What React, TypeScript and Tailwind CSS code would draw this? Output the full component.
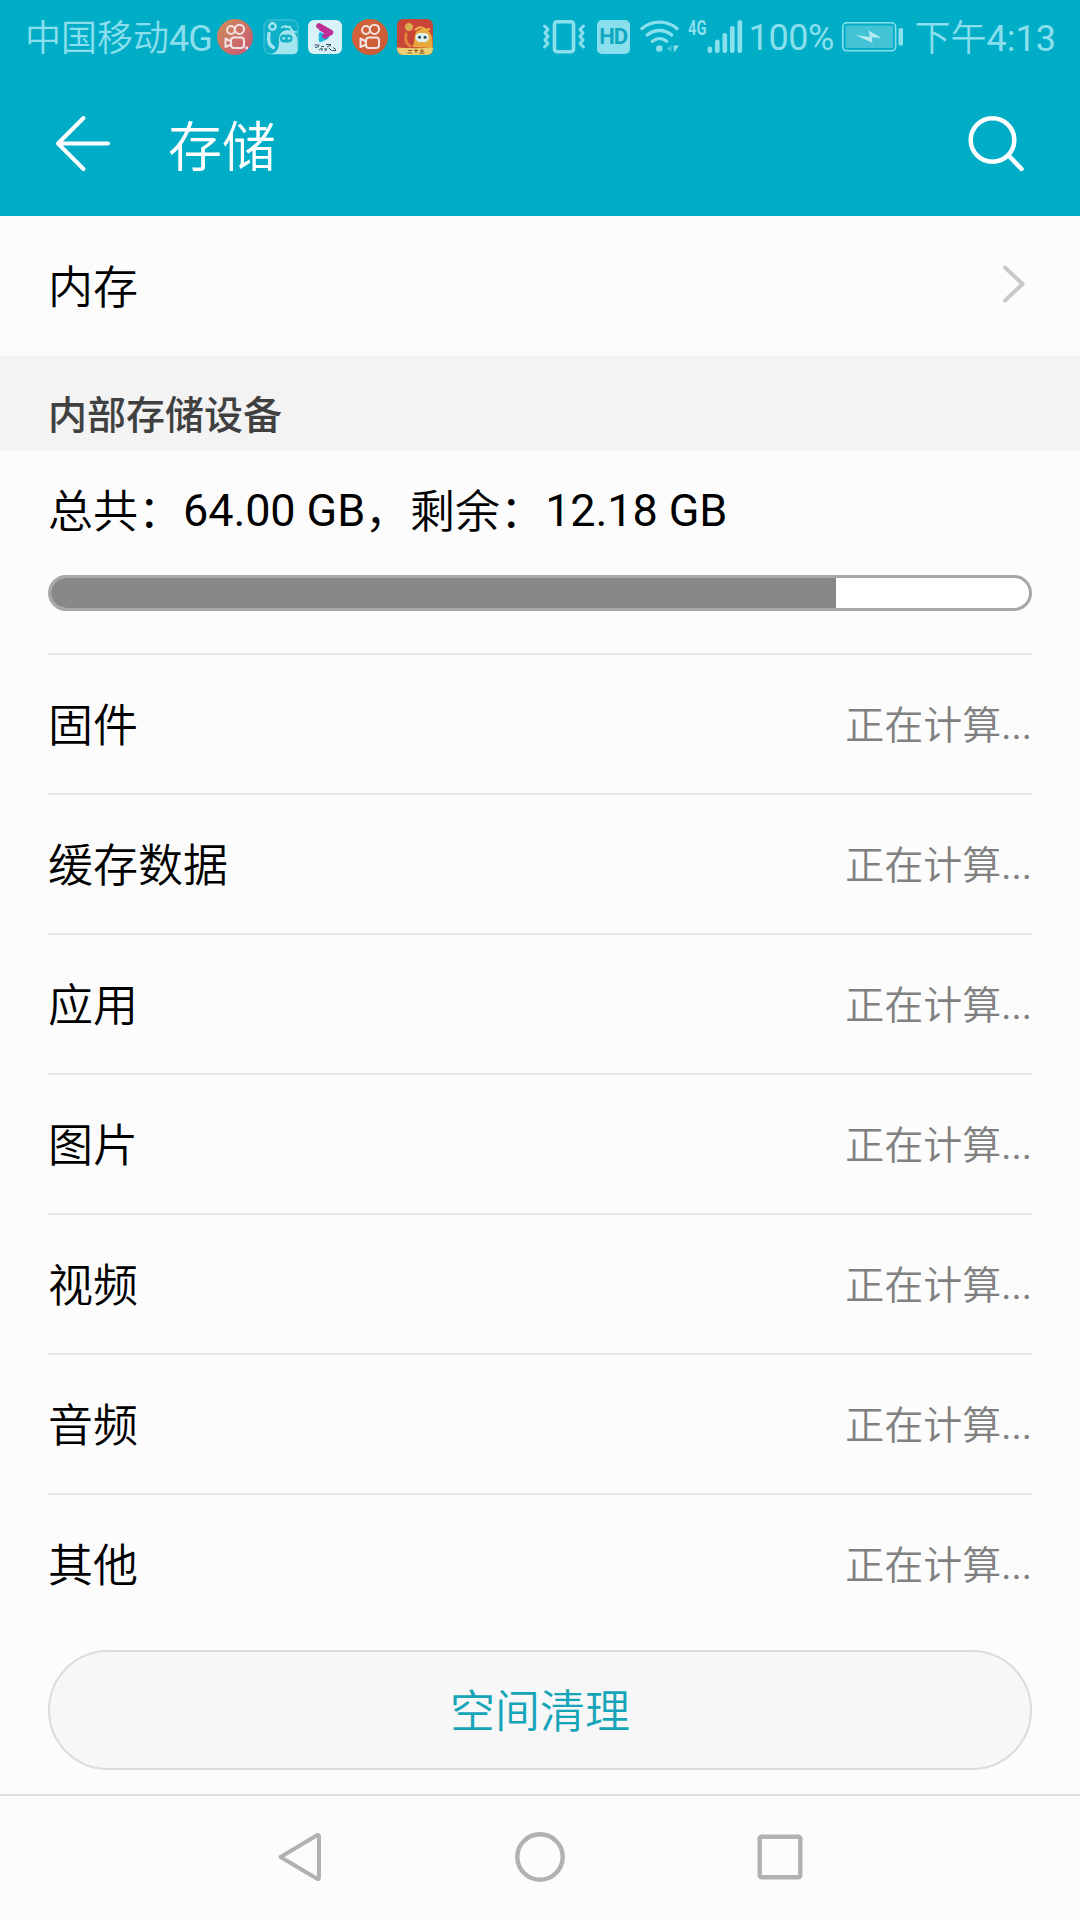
const categories = ['固件', '缓存数据', '应用', '图片', '视频', '音频', '其他']

const storage = { total: 64, free: 12.18 }

function KwaiIcon({ id, from, to, dot = false }: { id: string; from: string; to: string; dot?: boolean }) {
  return (
    <svg width="36" height="36" viewBox="0 0 36 36" fill="none">
      <defs>
        <linearGradient id={id} x1="0" y1="0" x2="1" y2="1">
          <stop offset="0" stopColor={from} />
          <stop offset="1" stopColor={to} />
        </linearGradient>
      </defs>
      <circle cx="18" cy="18" r="18" fill={`url(#${id})`} />
      <g stroke="#f3e3e4" strokeWidth="2">
        <circle cx="14" cy="11" r="3.9" />
        <circle cx="22.5" cy="10.3" r="4.6" />
        <rect x="14" y="18.5" width="13" height="10.5" rx="3" />
        <path d="M14 22.5 8.5 19.5v8.5l5.5-2.5" strokeLinejoin="round" />
      </g>
      {dot && <rect x="28.5" y="27.5" width="2.6" height="2.8" fill="#f3e3e4" />}
    </svg>
  )
}

function GhostIcon() {
  return (
    <svg width="36" height="36" viewBox="0 0 36 36" fill="none">
      <rect x="1" y="1" width="34" height="34" rx="6" fill="#0fafc8" stroke="#4cc8db" strokeWidth="1" />
      <circle cx="9.5" cy="7.5" r="3.2" stroke="#a4e5ee" strokeWidth="2.4" />
      <path d="M6 14.5c-1 6-.5 12 4.5 14" stroke="#a4e5ee" strokeWidth="3.4" strokeLinecap="round" />
      <path d="M9 35c7-3 7-8 7-14 0-7 4-10 9-10 6 0 9.500 5 9.500 12v8c0 2.500-1.500 4-4 4z" fill="#a4e5ee" />
      <path d="M18 9c3-3 8-2.500 12 3M22 8.500l6-1M34 13l-6-.5" stroke="#a4e5ee" strokeWidth="1.6" />
      <rect x="17" y="15.5" width="12.500" height="8" rx="4" fill="#14b0c8" />
      <circle cx="20.8" cy="19.3" r="1.4" fill="#a4e5ee" />
      <circle cx="26" cy="19.3" r="1.4" fill="#a4e5ee" />
    </svg>
  )
}

function VideoIcon() {
  return (
    <svg width="34" height="34" viewBox="0 0 34 34" fill="none">
      <rect width="34" height="34" rx="6" fill="#d9f2f7" />
      <path d="M12.5 14v6.500L19 17.500z" fill="#19b7df" stroke="#19b7df" strokeWidth="3.5" strokeLinejoin="round" />
      <path d="M11 6 22.500 12.500l-5.500 3.500" stroke="#bd2f96" strokeWidth="5.6" strokeLinecap="round" strokeLinejoin="round" />
      <path d="M12 8.500 18 12" stroke="#bd2f96" strokeWidth="4" />
      <path d="M6.500 25h5M7 27.500l4-1M13 26.500h3M18 24.500h5M19 27l4-2M11 30l3-2v3M16 29h3l-2 2.500M21 28l3 3M25 27.500l3 2M24.500 30.500h3.500" stroke="#2f4f60" strokeWidth="1" />
    </svg>
  )
}

function GameIcon() {
  return (
    <svg width="36" height="36" viewBox="0 0 36 36" fill="none">
      <rect width="36" height="36" rx="6" fill="#c94538" />
      <circle cx="12" cy="8" r="3.6" fill="#d9ae55" stroke="#e09a48" strokeWidth="1.2" />
      <path d="M9 15c-1 6 0 10 4 12" stroke="#e0843c" strokeWidth="3" strokeLinecap="round" />
      <path d="M15 28c3-4 2-8 3-12 1-4 4-6 8-6 6 0 9.500 6 9.500 12v7z" fill="#e9a93c" />
      <path d="M18 11c4-4 9-3 11 0l4-1" stroke="#f0bd48" strokeWidth="2" />
      <rect x="18.5" y="14" width="13.5" height="9" rx="4.5" fill="#dff2f2" />
      <circle cx="22.5" cy="18.3" r="1.5" fill="#2a4650" />
      <circle cx="28" cy="18.3" r="1.5" fill="#2a4650" />
      <path d="M0 28.500c12 1 24 1 36 0V30a6 6 0 0 1-6 6H6a6 6 0 0 1-6-6z" fill="#ebcf72" />
      <path d="M11 31.500h4M10.500 34h4.500M17 31.500h4M19 30v4M23 32h4M22.500 34.300h5M25 30v4" stroke="#8f5a35" strokeWidth="1" />
    </svg>
  )
}

function VibrateIcon() {
  return (
    <svg width="42" height="34" viewBox="0 0 42 34" fill="none" stroke="currentColor">
      <rect x="11.5" y="1.8" width="19" height="30" rx="2.5" strokeWidth="3.6" />
      <path d="M1.500 6 5 9.500 2 13l3 3.500-3 3.500 3 3.500-3.500 3.500" strokeWidth="3" strokeLinecap="round" strokeLinejoin="round" />
      <path d="M40.500 6 37 9.500l3 3.500-3 3.500 3 3.500-3 3.500 3.500 3.500" strokeWidth="3" strokeLinecap="round" strokeLinejoin="round" />
    </svg>
  )
}

function WifiIcon() {
  return (
    <svg width="40" height="34" viewBox="0 0 40 34" fill="none" stroke="currentColor" strokeWidth="3.4" strokeLinecap="round">
      <path d="M2 8.500c10-8.500 25-8.500 35 0" />
      <path d="M7.200 15c7.500-6 17-6 24.500 0" />
      <path d="M12.500 21.300c4.300-3.600 10-3.600 14.200 0" />
      <circle cx="19.3" cy="28.5" r="3.3" fill="currentColor" stroke="none" />
      <path d="M31.500 25v7l-5-3.500z" fill="#3ec3d6" stroke="none" />
      <path d="M33.500 25.500h5.500l-5 7z" fill="currentColor" stroke="none" />
    </svg>
  )
}

function SignalIcon() {
  return (
    <svg width="36" height="34" viewBox="0 0 36 34" fill="currentColor">
      <rect x="0.5" y="26.5" width="4.6" height="6.5" rx="2.2" />
      <rect x="8" y="19.5" width="4.6" height="13.5" rx="2.2" />
      <rect x="15.5" y="13" width="4.6" height="20" rx="2.2" />
      <rect x="23" y="6" width="4.6" height="27" rx="2.2" />
      <rect x="30.5" y="0" width="4.6" height="33" rx="2.2" />
    </svg>
  )
}

function BatteryIcon() {
  return (
    <svg width="62" height="30" viewBox="0 0 62 30" fill="none">
      <rect x="0.8" y="0.8" width="52.8" height="28" rx="4" stroke="#8adfed" strokeWidth="1.6" />
      <rect x="3.5" y="3.5" width="47.5" height="22.6" rx="1" fill="#42c3d6" />
      <path d="M13.500 13 28 15l-1.500-6.500L39.500 16l-10-0.800 1 5.800z" fill="#b5eaf2" />
      <rect x="56.5" y="6" width="4.5" height="17.5" rx="1.5" fill="#8adfed" />
    </svg>
  )
}

function StatusBar() {
  return (
    <div className="flex h-[74px] items-center justify-between pl-[25px] pr-[24px] text-[36px] leading-none font-[350] text-[#8adfed]">
      <div className="flex items-center">
        <span className="w-[192px] pt-[3px] whitespace-nowrap">
          中国移动<span className="font-normal tracking-[-1px]">4G</span>
        </span>
        <div className="flex items-center gap-[9.5px]">
          <KwaiIcon id="kwai-a" from="#cf8f55" to="#c75577" dot />
          <GhostIcon />
          <VideoIcon />
          <KwaiIcon id="kwai-b" from="#d3633a" to="#cb5a34" />
          <GameIcon />
        </div>
      </div>
      <div className="flex items-center">
        <VibrateIcon />
        <span className="ml-[12px] flex h-[34px] w-[33px] items-center justify-center rounded-[5px] bg-[#8adfed] text-[22px] font-bold tracking-[-1px] text-[#10a9c1]">
          HD
        </span>
        <span className="ml-[10px]"><WifiIcon /></span>
        <span className="ml-[8px] mb-[18px] w-[19px] whitespace-nowrap">
          <span className="block w-[28px] origin-left scale-x-[0.7] text-[21px] leading-[24px] font-bold">4G</span>
        </span>
        <SignalIcon />
        <span className="ml-[6px] w-[93px] pt-[2px] font-normal tracking-[-0.4px]">100%</span>
        <BatteryIcon />
        <span className="ml-[11px] pt-[3px] whitespace-nowrap">
          下午<span className="font-normal">4:13</span>
        </span>
      </div>
    </div>
  )
}

function TitleBar() {
  return (
    <div className="flex h-[142px] items-center pl-[54px] pr-[56px] pb-[4px] text-white">
      <svg width="58" height="58" viewBox="0 0 58 58" fill="none" stroke="currentColor" strokeWidth="4" strokeLinecap="round" strokeLinejoin="round">
        <path d="M29.500 4 4 29.500 29.500 55M4 29.500h50" />
      </svg>
      <h1 className="ml-[56px] grow pt-[12px] text-[54px] leading-none font-[350]">存储</h1>
      <svg width="58" height="58" viewBox="0 0 58 58" fill="none" stroke="currentColor" strokeWidth="4.5" strokeLinecap="round">
        <circle cx="26.5" cy="26" r="21.8" />
        <path d="M42.500 41.500l13 13.500" />
      </svg>
    </div>
  )
}

function NavBar() {
  return (
    <nav className="flex h-[126px] items-center justify-between border-t-2 border-[#dfdfdf] px-[276px] pb-[2px] text-[#b1b1b1]">
      <svg width="48" height="52" viewBox="0 0 48 52" fill="none" stroke="currentColor" strokeWidth="4" strokeLinejoin="round">
        <path d="M4.500 26 41.500 4q1.500-.5 1.500 1.500v41q0 2-1.500 1.500z" />
      </svg>
      <svg width="52" height="52" viewBox="0 0 52 52" fill="none" stroke="currentColor" strokeWidth="4.4">
        <circle cx="26" cy="26" r="22.7" />
      </svg>
      <svg width="48" height="48" viewBox="0 0 48 48" fill="none" stroke="currentColor" strokeWidth="4.4">
        <rect x="3.7" y="3.7" width="40.6" height="40.6" rx="2" />
      </svg>
    </nav>
  )
}

export default function App() {
  const used = ((storage.total - storage.free) / storage.total) * 100

  return (
    <div className="flex h-[1920px] w-[1080px] flex-col overflow-hidden bg-[#fcfcfc] font-['Roboto','Noto_Sans_CJK_SC',sans-serif] font-[350] text-black" lang="zh-CN">
      <header className="h-[216px] bg-[#00adc7]">
        <StatusBar />
        <TitleBar />
      </header>

      <main className="grow">
        <div className="flex h-[140px] items-center justify-between pl-12 pr-[54px] text-[45px] leading-none">
          <span className="pt-[5px]">内存</span>
          <svg className="mb-[4px]" width="24" height="40" viewBox="0 0 24 40" fill="none" stroke="#c9c9c9" strokeWidth="4" strokeLinecap="round" strokeLinejoin="round">
            <path d="M3 3.500 20.500 20 3 36.500" />
          </svg>
        </div>
        <h2 className="flex h-[95px] items-center bg-[#f3f3f3] px-12 pt-[26px] text-[39px] leading-none font-medium text-[#404040]">
          内部存储设备
        </h2>

        <section className="px-12">
          <p className="flex h-[124px] items-center pb-[4px] text-[45px] leading-none whitespace-pre">
            <span className="pt-[2px]">总共：</span>
            <span className="pb-[1px] font-normal tracking-[-0.1px]">{storage.total.toFixed(2)} GB</span>
            <span className="pt-[2px]">，剩余：</span>
            <span className="pb-[1px] font-normal tracking-[-0.1px]">{storage.free.toFixed(2)} GB</span>
          </p>
          <div className="h-[36px] overflow-hidden rounded-full border-[3px] border-[#a7a7a7] bg-white">
            <div className="h-full bg-[#888888]" style={{ width: `${used - 0.7}%` }} />
          </div>
          <ul className="mt-[42px]">
            {categories.map((name) => (
              <li key={name} className="flex h-[140px] items-center justify-between border-t-2 border-[#e5e5e5] pt-[5px] leading-none">
                <span className="text-[45px]">{name}</span>
                <span className="text-[39px] text-[#808080]">
                  正在计算<span className="font-normal">...</span>
                </span>
              </li>
            ))}
          </ul>
          <button className="mt-[17px] flex h-[120px] w-full items-center justify-center rounded-full border-2 border-[#dcdcdc] bg-[#f7f7f7] pt-[5px] text-[45px] leading-none text-[#16a5b8]">
            空间清理
          </button>
        </section>
      </main>

      <NavBar />
    </div>
  )
}
